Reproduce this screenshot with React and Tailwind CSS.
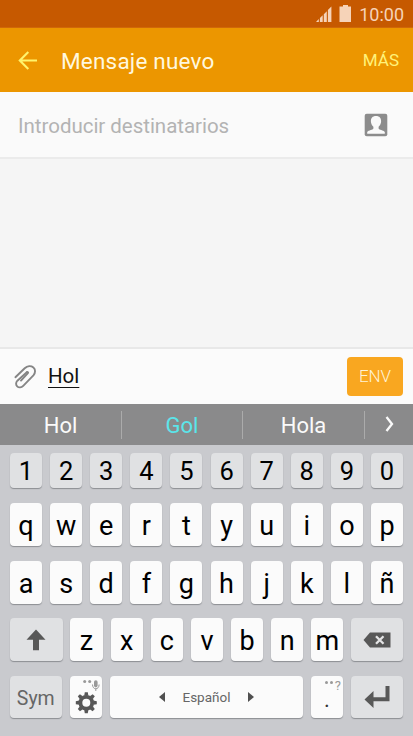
import React from "react";

const NUMBERS = "1234567890".split("");
const TOP = "qwertyuiop".split("");
const HOME = "asdfghjklñ".split("");
const BOTTOM = "zxcvbnm".split("");

const SHADOW = "shadow-[0_1px_1px_rgba(90,92,98,0.55)]";

function Key({ dark, className = "", children }) {
  return (
    <div
      className={`flex items-center justify-center rounded-[4px] ${SHADOW} ${
        dark ? "bg-[#e0e1e3]" : "bg-[#fbfbfb]"
      } ${className}`}
    >
      {children}
    </div>
  );
}

function LetterRow({ letters, className = "" }) {
  return (
    <div className={`grid grid-cols-10 gap-x-[8.1px] ${className}`}>
      {letters.map((c) => (
        <Key key={c} className="h-[43px] text-[27px] leading-[43px]">
          <span className="pt-[4px]">{c}</span>
        </Key>
      ))}
    </div>
  );
}

function StatusBar() {
  return (
    <div className="flex h-[28px] items-start justify-end border-b border-[#d06808] bg-[#c65900] pr-[9px] text-[#f6d3b8]">
      <svg className="mt-[6px] h-[16px] w-[17px]" viewBox="0 0 17 16" fill="currentColor">
        <path d="M0 16L2.8 13V16ZM3.9 16V12L6.7 9.2V16ZM7.8 16V8.2L10.8 5.2V16ZM11.9 16V4.1L15.4 .6V16Z" />
      </svg>
      <svg className="ml-[6px] mt-[5px] h-[17px] w-[13px]" viewBox="0 0 13 17" fill="currentColor">
        <path d="M4 0H9V1.5H12V17H0.5V1.5H4Z" />
      </svg>
      <span className="ml-[7px] mt-[5px] text-[18px] leading-[20px]">10:00</span>
    </div>
  );
}

export default function App() {
  return (
    <div className="flex h-[736px] w-[413px] flex-col overflow-hidden bg-[#f5f5f5] font-['Roboto',sans-serif]">
      <StatusBar />

      <header className="flex h-[64px] items-center bg-[#ec9600] pl-[18px] pr-[14px]">
        <svg className="h-[20px] w-[20px]" viewBox="0 0 20 20" fill="none" stroke="#fff46c" strokeWidth="2.1">
          <path d="M19 10.5H2M10.3 2L1.8 10.5L10.3 19" />
        </svg>
        <h1 className="ml-[23px] pt-[2px] text-[22.5px] leading-[28px] tracking-[0.2px] text-[#fff8df]">
          Mensaje nuevo
        </h1>
        <span className="ml-auto text-[17px] leading-[20px] text-[#fff27a]">MÁS</span>
      </header>

      <div className="flex h-[67px] items-center justify-between border-b-2 border-[#ebebeb] bg-[#fafafa] pl-[18px] pr-[25px]">
        <span className="pt-[3px] text-[20.5px] leading-[26px] tracking-[-0.03px] text-[#b3b3b3]">
          Introducir destinatarios
        </span>
        <svg className="mt-[1px] h-[24px] w-[24px]" viewBox="0 0 24 24">
          <rect x="0.7" y="0.7" width="22.6" height="22.6" rx="2" fill="#8c8c8c" />
          <path
            d="M12 3C8.5 3 6.7 5.2 6.9 8.4C7 10.6 8 12.4 9.4 13.8V15.6C8.8 17 4.8 17.3 3.2 19V20.8H20.8V19C19.2 17.3 15.2 17 14.6 15.6V13.8C16 12.4 17 10.6 17.1 8.4C17.3 5.2 15.5 3 12 3Z"
            fill="#fafafa"
          />
        </svg>
      </div>

      <main className="flex-1" />

      <div className="flex h-[57px] items-center border-t-2 border-[#e8e8e8] bg-[#fbfbfb] pl-[14px] pr-[10px]">
        <svg
          className="mt-[1px] h-[24px] w-[23px]"
          viewBox="0 0 23 24"
          fill="none"
          stroke="#858585"
          strokeWidth="1.9"
          strokeLinecap="round"
          strokeLinejoin="round"
        >
          <path d="M1.4 12.2L10.7 3.2C13.3 .9 17 .6 19.4 2.5C21.7 4.4 21.5 8 19.4 10.4L9.2 20.8C7.4 22.7 4.8 22.9 3.2 21.4C1.6 19.9 1.8 17.4 3.4 15.7L12.8 7.2" />
          <path d="M12.8 7.2C13.6 6.6 14.5 7.4 13.9 8.2L7 15.6" />
        </svg>
        <span className="ml-[11px] -mt-[2px] text-[20.5px] leading-[26px] text-[#111] underline decoration-[1.3px] underline-offset-[4px]">
          Hol
        </span>
        <button className="ml-auto -mt-[1px] flex h-[39px] w-[56px] items-center justify-center rounded-[4px] bg-[#f9a720] pt-[1px] text-[17px] font-light text-[#fff3d5]">
          ENV
        </button>
      </div>

      <div className="flex h-[41px] items-center bg-[#8a8a8b] text-[22px] text-[#fafafa]">
        <div className="w-[121px] pt-[1px] text-center">Hol</div>
        <div className="h-[28px] w-px bg-[#ababab]" />
        <div className="w-[120px] pt-[1px] text-center text-[#5be5ea]">Gol</div>
        <div className="h-[28px] w-px bg-[#ababab]" />
        <div className="w-[121px] pt-[1px] text-center">Hola</div>
        <div className="h-[28px] w-px bg-[#ababab]" />
        <svg className="-mt-[2px] ml-[20px] h-[16px] w-[10px]" viewBox="0 0 10 16" fill="none" stroke="currentColor" strokeWidth="2.3">
          <path d="M1.5 1L7 8L1.5 15" />
        </svg>
      </div>

      <div className="h-[291px] bg-[#c9cace] pl-[10px] pr-[10px] pt-[7.5px] text-black">
        <div className="grid grid-cols-10 gap-x-[8.1px]">
          {NUMBERS.map((n) => (
            <Key key={n} dark className="h-[35.5px] text-[25.5px] leading-[35px]">
              <span className="pt-[2px]">{n}</span>
            </Key>
          ))}
        </div>
        <LetterRow letters={TOP} className="mt-[15px]" />
        <LetterRow letters={HOME} className="mt-[14.5px]" />

        <div className="mt-[14.5px] flex h-[43px] justify-between">
          <Key dark className="w-[52.5px]">
            <svg className="h-[22px] w-[20px]" viewBox="0 0 20 22" fill="#585858">
              <path d="M10 .5L19.5 10.7H13V21.3H7V10.7H.5Z" />
            </svg>
          </Key>
          {BOTTOM.map((c) => (
            <Key key={c} className="w-[32.2px] text-[27px] leading-[43px]">
              <span className="pt-[4px]">{c}</span>
            </Key>
          ))}
          <Key dark className="w-[51.5px]">
            <svg className="h-[16px] w-[28px]" viewBox="0 0 28 16">
              <path d="M.5 8L7 .5H27.5V15.5H7Z" fill="#585858" />
              <path d="M13 4.2L20.5 11.8M20.5 4.2L13 11.8" stroke="#e4e4e5" strokeWidth="2.3" />
            </svg>
          </Key>
        </div>

        <div className="-ml-[0.5px] mt-[14.5px] flex h-[42.5px] justify-between">
          <Key dark className="w-[52.5px] text-[19.5px] text-[#666]">
            <span className="pt-[3px]">Sym</span>
          </Key>
          <Key className="w-[32px]">
            <svg className="h-[42px] w-[32px]" viewBox="0 0 32 42">
              <g fill="#999">
                <circle cx="14.7" cy="5.5" r="1.5" />
                <circle cx="19.7" cy="5.5" r="1.5" />
                <rect x="24" y="4.2" width="3.6" height="7.2" rx="1.8" />
                <path d="M22.5 8.5C22.5 14.2 29.1 14.2 29.1 8.5M25.8 12.7V15" fill="none" stroke="#999" strokeWidth="1" />
              </g>
              <g transform="translate(16.3 26.7)" fill="#575757">
                <circle r="5.9" fill="none" stroke="#575757" strokeWidth="3.8" />
                <path id="tooth" d="M-2.1 -7L-1.5 -10.5H1.5L2.1 -7Z" />
                <use href="#tooth" transform="rotate(45)" />
                <use href="#tooth" transform="rotate(90)" />
                <use href="#tooth" transform="rotate(135)" />
                <use href="#tooth" transform="rotate(180)" />
                <use href="#tooth" transform="rotate(225)" />
                <use href="#tooth" transform="rotate(270)" />
                <use href="#tooth" transform="rotate(315)" />
              </g>
            </svg>
          </Key>
          <Key className="w-[193px] text-[13.5px] text-[#666]">
            <svg className="mr-[17px] h-[10px] w-[6px]" viewBox="0 0 6 10" fill="#505050">
              <path d="M6 0V10L0 5Z" />
            </svg>
            <span className="leading-[18px]">Español</span>
            <svg className="ml-[17px] h-[10px] w-[6px]" viewBox="0 0 6 10" fill="#505050">
              <path d="M0 0V10L6 5Z" />
            </svg>
          </Key>
          <Key className="w-[32px] flex-col">
            <div className="flex h-[18px] w-full items-start justify-end gap-[2px] pr-[2px] pt-[4px]">
              <i className="mt-[1px] h-[3px] w-[3px] rounded-full bg-[#999]" />
              <i className="mt-[1px] h-[3px] w-[3px] rounded-full bg-[#999]" />
              <span className="text-[13px] leading-[12px] text-[#999]">?</span>
            </div>
            <span className="h-[24px] text-[22px] leading-[12px] text-[#333]">.</span>
          </Key>
          <Key dark className="w-[52px]">
            <svg className="h-[22px] w-[26px]" viewBox="0 0 26 22" fill="#585858">
              <path d="M21.5 0H25.5V15.3H9.5V22L.5 13.5L9.5 5V11.3H21.5Z" />
            </svg>
          </Key>
        </div>
      </div>
    </div>
  );
}
